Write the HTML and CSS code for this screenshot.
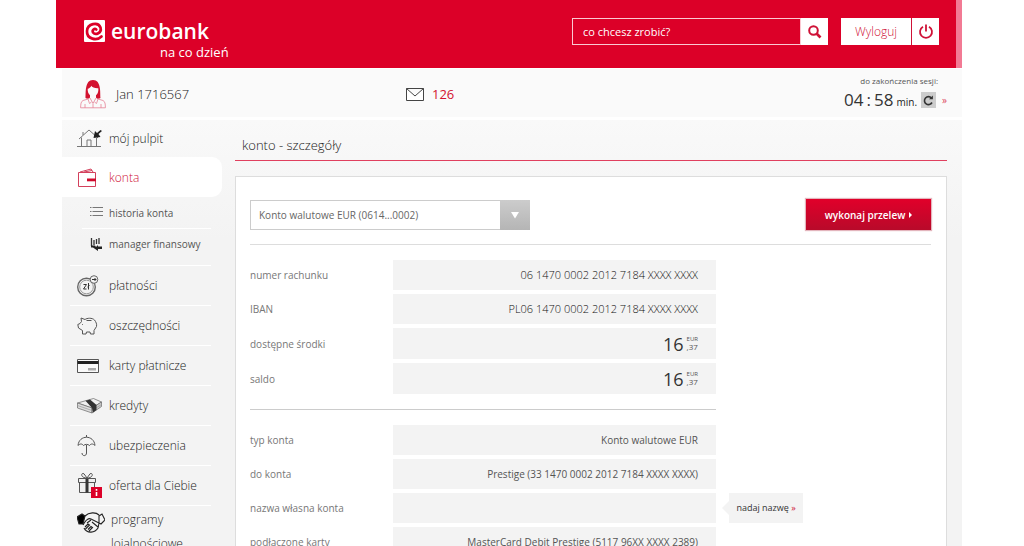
FILE: index.html
```html
<!DOCTYPE html>
<html lang="pl">
<head>
<meta charset="utf-8">
<meta name="viewport" content="width=device-width, initial-scale=1">
<title>eurobank - konto - szczegóły</title>
<link rel="stylesheet" href="styles.css">
</head>
<body>
<div class="page">
  <header class="header">
    <a class="brand" href="#">
      <svg class="brand-mark" viewBox="0 0 21 22" aria-hidden="true">
        <rect width="21" height="22" rx="1" fill="#fff"/>
        <path d="M17.500 16.500C13 21 2.500 19.500 3 11C3.500 3.500 14 1.500 16.500 7.500C18 13 11.500 15.500 9 12.500C7.800 10 10.500 8 12.300 9.500" fill="none" stroke="#dc0028" stroke-width="2.700" stroke-linecap="round"/>
      </svg>
      <span class="brand-name">eurobank</span>
      <span class="brand-tag">na co dzień</span>
    </a>
    <form class="search">
      <input class="search-input" type="text" placeholder="co chcesz zrobić?" aria-label="co chcesz zrobić?">
      <button class="search-button" type="button" aria-label="Szukaj">
        <svg width="14" height="14" viewBox="0 0 14 14" fill="none" stroke="#cf1237" stroke-width="2"><circle cx="5.500" cy="5.500" r="4.300"/><path d="M8.500 8.500l4 4" stroke-width="2.600"/></svg>
      </button>
    </form>
    <button class="logout" type="button">
      <span class="logout-text">Wyloguj</span>
      <span class="logout-icon">
        <svg width="16" height="16" viewBox="0 0 16 16" fill="none" stroke="#cf1237" stroke-width="1.800"><path d="M5 2.700a6 6 0 1 0 6 0M8 .5v7"/></svg>
      </span>
    </button>
  </header>

  <section class="userbar">
    <div class="user">
      <svg width="26" height="30" viewBox="0 0 26 30" aria-hidden="true">
        <path d="M5.500 19C6 14 4.500 1 13 1s7 13 7.500 18c-2 1.500-4 .5-4.500-.5v-2.200c2-1.300 2.600-4.300 2.300-7C15 9.500 12 8.500 11.300 6.800C10.500 8.500 9 9.500 7.700 9.800c-.2 3 .8 5.200 2.300 6.500v2.200C9 20 7 20 5.500 19z" fill="#d3122f"/>
        <path d="M8 20l-5 1.500C1 22.500.7 25 .6 28.800h24.800c0-4-.4-6.300-2.400-7.300L18 20M10 19l3 5.500L16 19M8 20l1.500 4.500 2-1.500M18 20l-1.500 4.500-2-1.500M13 25v4M5 25v4M21 25v4" fill="none" stroke="#e88ea0" stroke-width=".9"/>
      </svg>
      <span class="user-name">Jan 1716567</span>
    </div>
    <a class="mail" href="#">
      <svg width="18" height="13" viewBox="0 0 18 13" fill="#fff" stroke="#444"><path d="M.5.5h17v12H.5zM.5.500L9 8l8.500-7.500"/></svg>
      <span>126</span>
    </a>
    <div class="session">
      <span class="session-label">do zakończenia sesji:</span>
      <div class="session-row">
        <span class="clock">04<span class="colon">:</span>58</span>
        <span class="unit">min.</span>
        <button class="refresh" type="button" aria-label="Odśwież">
          <svg width="11" height="11" viewBox="0 0 11 11" fill="none" stroke="#333" stroke-width="1.600"><path d="M9 7.500A4 4 0 1 1 8.500 3"/><path d="M6 4.200h3.900V.5z" fill="#333" stroke="none"/></svg>
        </button>
        <a class="more" href="#" aria-label="więcej">»</a>
      </div>
    </div>
  </section>

  <div class="layout">
    <nav class="menu">
      <a class="item item-first" href="#">
        <svg class="icon" viewBox="0 0 26 22" fill="none" stroke="#777"><path d="M0 18.500h24M4.500 18V9.500M19.500 18V10M2 11L12 2l9 8M10 18v-6h4v6M6 7V4"/><path d="M25 3l-3.500 3 2 3-7 1 1.500-7 2 2L23.500 2z" fill="#222" stroke="none"/></svg>
        <span>mój pulpit</span>
      </a>
      <a class="item item-active" href="#" aria-current="page">
        <svg class="icon" viewBox="0 0 26 22" fill="none" stroke="#d3405c"><path d="M1.500 5.500h17v14h-17zM3 5l11-3 2 3M7 5l8-1.500"/><path d="M10 11.500h9v2.800h-9z" fill="#cf0a2d" stroke="none"/></svg>
        <span>konta</span>
      </a>
      <a class="subitem" href="#">
        <svg class="subicon" viewBox="0 0 15 13" fill="none" stroke="#777"><path d="M3.500 1.500H14M3.500 5.500H14M3.500 9.500H14M1 1.500h1.500M1 5.500h1.500M1 9.500h1.500"/></svg>
        <span>historia konta</span>
      </a>
      <a class="subitem" href="#">
        <svg class="subicon" viewBox="0 0 15 13" fill="none" stroke="#333"><path d="M2.500 0v8M5 2v5M7.500 1v5M10 0v6" stroke-width="1.300"/><path d="M2 7.500h4l1 1.500 2-2v1.500h4v2.400H9V13L4 9.500H2z" fill="#222" stroke="none"/></svg>
        <span>manager finansowy</span>
      </a>
      <a class="item item-group" href="#">
        <svg class="icon" viewBox="0 0 26 22" fill="none" stroke="#666"><circle cx="9.500" cy="12" r="8.800" stroke-width="1.400"/><circle cx="9.500" cy="12" r="6.800" stroke="#999"/><path d="M6.500 9.500h3l-3 4.500h3M11.500 8v6.500M10.500 12l2-1.500" stroke="#333"/><circle cx="17" cy="4.500" r="3.800" fill="#f3f3f3"/><path d="M15 4.500h4M17.500 3L19 4.500 17.500 6" stroke="#333"/></svg>
        <span>płatności</span>
      </a>
      <a class="item" href="#">
        <svg class="icon" viewBox="0 0 26 22" fill="none" stroke="#555"><path d="M4 3l4 1.500C10 3 15 2.500 17.500 5c1.500 2 2.500 4 2 6.500L17 15.500V19h-3.500l-.5-2H9.500L9 19H5.500v-3.500L1.500 13 .8 9.500 3 8.500l1.500-2zM9.500 5.500h5M5.500 9v.8"/></svg>
        <span>oszczędności</span>
      </a>
      <a class="item" href="#">
        <svg class="icon" viewBox="0 0 26 22" fill="none" stroke="#555"><path d="M.5 4.500h21v13H.5z" fill="#fafafa"/><path d="M.5 6h21v3H.5z" fill="#222" stroke="none"/><path d="M11 13h8v2.500h-8z" fill="#aaa" stroke="none"/></svg>
        <span>karty płatnicze</span>
      </a>
      <a class="item" href="#">
        <svg class="icon" viewBox="0 0 26 22" stroke="#666" stroke-width=".7"><path d="M.5 8l16-4.500 8 3.500-9.500 6z" fill="#f0f0f0"/><path d="M.5 8L15 13v5L.5 13z" fill="#ddd"/><path d="M15 13l9.500-6v4.500L15 18z" fill="#ccc"/><path d="M.5 10.500L15 15.500l9.500-6" fill="none" stroke="#999"/><path d="M8.500 5.800l4.500-1.200 6.500 5.500v5L16 17.500l-1-4.500z" fill="#333" stroke="none"/></svg>
        <span>kredyty</span>
      </a>
      <a class="item" href="#">
        <svg class="icon" viewBox="0 0 26 22" fill="none" stroke="#555"><path d="M1 10.500C2 -.5 17 -.5 18 10.500c-2-2-4-2-5.500 0-1.500-1.500-4.500-1.500-6 0C5 8.500 3 8.500 1 10.500zM9.500 0v2M9.500 10v8c0 3.500-4.500 3.500-4.500 0"/></svg>
        <span>ubezpieczenia</span>
      </a>
      <a class="item" href="#">
        <svg class="icon icon-gift" viewBox="0 0 26 26" fill="none" stroke="#555"><path d="M1.500 5.500h17v4h-17zM2.500 9.500h15v10h-15z" fill="#eee"/><path d="M8.500 5.500h3v14h-3z" fill="#333" stroke="none"/><path d="M10 5C3 5 4-1 7 .8L10 5l3-4.200C16-1 17 5 10 5"/><path d="M14 14h11v11H14z" fill="#dc0028" stroke="none"/><path d="M19.500 16v1.800M19.500 19v4" stroke="#fff" stroke-width="1.600"/></svg>
        <span>oferta dla Ciebie</span>
      </a>
      <a class="item item-last" href="#">
        <svg class="icon icon-hands" viewBox="0 0 28 22" fill="none" stroke="#222" stroke-width="1.100"><path d="M0 5l5-3 3 2-2 8-4 0z" fill="#000"/><path d="M8 4c4-4 11-4 14-1M22 4l3-2 3 6-4 4-2-1zM6 13c3-6 6-7 8-6s6 3 8 4l-1 5c-3 5-11 6-14 0M8 15l3-3 1.500 1-4 4M11 17.500l3-3 1.500 1-3.500 3.500M14 8l-4 3M15 10l6 5" fill="none"/></svg>
        <span>programy lojalnościowe</span>
      </a>
    </nav>

    <main class="main">
      <h1 class="title">konto - szczegóły</h1>
      <div class="panel">
        <div class="toolbar">
          <div class="account">
            <select class="account-select" aria-label="Konto">
              <option>Konto walutowe EUR (0614...0002)</option>
            </select>
            <svg class="account-arrow" viewBox="0 0 30 30" aria-hidden="true"><path d="M11 12h8l-4 6.500z" fill="#fff"/></svg>
          </div>
          <button class="transfer" type="button">wykonaj przelew <svg width="3" height="6" viewBox="0 0 3 6"><path d="M0 0l3 3-3 3z" fill="#fff"/></svg></button>
        </div>

        <dl class="details">
          <div class="row"><dt>numer rachunku</dt><dd class="number">06 1470 0002 2012 7184 XXXX XXXX</dd></div>
          <div class="row"><dt>IBAN</dt><dd class="number">PL06 1470 0002 2012 7184 XXXX XXXX</dd></div>
          <div class="row row-amount"><dt>dostępne środki</dt><dd><span class="whole">16</span><span class="minor"><span class="currency">EUR</span><span>,37</span></span></dd></div>
          <div class="row row-amount"><dt>saldo</dt><dd><span class="whole">16</span><span class="minor"><span class="currency">EUR</span><span>,37</span></span></dd></div>
        </dl>
        <dl class="details details-more">
          <div class="row"><dt>typ konta</dt><dd>Konto walutowe EUR</dd></div>
          <div class="row"><dt>do konta</dt><dd>Prestige (33 1470 0002 2012 7184 XXXX XXXX)</dd></div>
          <div class="row"><dt>nazwa własna konta</dt><dd></dd><dd class="rename"><a href="#">nadaj nazwę <span class="raquo">»</span></a></dd></div>
          <div class="row"><dt>podłączone karty</dt><dd>MasterCard Debit Prestige (5117 96XX XXXX 2389)</dd></div>
        </dl>
      </div>
    </main>
  </div>
</div>
</body>
</html>
```
FILE: styles.css
```css
* { box-sizing: border-box; }

html { scrollbar-width: none; }

body {
  margin: 0;
  background: #fff;
  color: #222;
  font: 300 12px/16px "Open Sans", "Noto Sans", sans-serif;
}

a { color: inherit; text-decoration: none; }

button, input, select { font: inherit; border: 0; border-radius: 0; margin: 0; }

svg { display: block; flex: none; }

.page { margin: 0 62px 0 56px; }

/* Header */
.header {
  display: flex;
  align-items: flex-start;
  height: 68px;
  padding: 18px 17px 0 28px;
  background: #dc0028;
  border-right: 6px solid #f27a94;
  color: #fff;
}

.brand {
  display: grid;
  grid-template-columns: 21px auto;
  column-gap: 6px;
  align-items: center;
  margin-right: auto;
  padding-top: 2px;
}

.brand-mark { width: 21px; height: 22px; }
.brand-name { font-size: 21px; line-height: 22px; font-weight: 600; }
.brand-tag { grid-column: 1 / 3; margin-left: 76px; font-size: 13px; line-height: 20px; font-weight: 400; white-space: nowrap; }

.search { display: flex; width: 256px; height: 27px; margin-right: 13px; }

.search-input {
  flex: 1;
  min-width: 0;
  padding: 0 10px;
  background: transparent;
  border: 1px solid #fbc9d2;
  color: #fff;
  font-size: 11px;
  font-weight: 400;
}

.search-input::placeholder { color: #fff; opacity: 1; }

.search-button {
  display: grid;
  place-items: center;
  width: 27px;
  padding: 0;
  background: #fff;
}

.logout { display: flex; height: 27px; padding: 0; background: #fff; color: #cf1237; }
.logout-text { width: 70px; line-height: 27px; text-align: center; }
.logout-icon { display: grid; place-items: center; width: 28px; height: 27px; border-left: 1px solid #cf1237; }

/* User bar */
.userbar {
  display: grid;
  grid-template-columns: 326px 1fr auto;
  align-items: center;
  height: 48px;
  margin: 1px 0 3px 6px;
  padding: 2px 15px 0 18px;
  background: #fafafa;
}

.user { display: flex; align-items: center; gap: 10px; }
.user-name { font-size: 13px; }
.mail { display: flex; align-items: center; gap: 8px; justify-self: start; color: #d3122f; font-size: 13px; font-weight: 400; }
.session-label { display: block; padding-right: 9px; text-align: right; font-size: 8px; line-height: 12px; font-weight: 400; color: #555; }
.session-row { display: flex; align-items: center; justify-content: flex-end; line-height: 22px; }
.clock { display: flex; font-size: 17px; font-weight: 400; color: #333; }
.colon { padding: 0 3px; }
.unit { margin: 4px 4px 0 3px; font-size: 10px; font-weight: 400; }
.refresh { display: grid; place-items: center; width: 15px; height: 16px; padding: 0; background: #ccc; }
.more { margin-left: 6px; color: #dc4560; font-size: 10px; font-weight: 400; }

/* Layout */
.layout {
  display: grid;
  grid-template-columns: 160px 1fr;
  column-gap: 13px;
  margin-left: 6px;
  padding-right: 15px;
  background: linear-gradient(#f9f9f9, #f3f3f3 120px);
}

/* Menu */
.item {
  display: flex;
  align-items: center;
  gap: 6px;
  min-height: 40px;
  margin: 0 11px 0 8px;
  padding-left: 7px;
  border-top: 1px solid #fff;
}

.item-first { min-height: 37px; border-top: 0; }
.item-active { margin: 0 0 0 -6px; padding-left: 21px; border-radius: 0 10px 10px 0; background: #fff; color: #cf1237; }
.item-group { margin-top: 6px; }
.icon { width: 26px; height: 22px; }
.icon-gift { height: 26px; }
.icon-hands { width: 28px; }
.item-last { align-items: flex-start; line-height: 24px; padding-top: 2px; }
.item-last .icon { margin-top: 4px; }

.subitem {
  display: flex;
  align-items: center;
  gap: 5px;
  height: 31px;
  margin: 0 11px 0 20px;
  padding-left: 7px;
  font-size: 10px;
  font-weight: 400;
  color: #555;
}

.subitem + .subitem { border-top: 1px solid #fff; }
.subicon { width: 15px; height: 13px; }

/* Main */
.title {
  margin: 0 0 15px;
  padding: 15px 7px 5px;
  border-bottom: 1px solid #e0405f;
  font-size: 13px;
  line-height: 20px;
  font-weight: 300;
}

.panel { padding: 22px 15px 22px 14px; background: #fff; border: 1px solid #ddd; }

.toolbar {
  display: flex;
  justify-content: space-between;
  align-items: center;
  padding-bottom: 14px;
  border-bottom: 1px solid #ddd;
}

.account { display: flex; width: 280px; height: 30px; position: relative; }

.account-select {
  width: 100%;
  padding: 0 38px 0 8px;
  appearance: none;
  background: #fff;
  border: 1px solid #ccc;
  color: #666;
  font-size: 10px;
  font-weight: 400;
}

.account-arrow {
  position: absolute;
  right: 0;
  top: 0;
  width: 30px;
  height: 30px;
  background: linear-gradient(#ccc, #b5b5b5);
  pointer-events: none;
}

.transfer {
  display: flex;
  align-items: center;
  justify-content: center;
  gap: 4px;
  width: 125px;
  height: 31px;
  padding: 0;
  background: linear-gradient(#e1002a, #b80a2a);
  box-shadow: 0 0 1px 1px #e3b5bd;
  color: #fff;
  font-size: 10px;
  font-weight: 600;
}

.details {
  display: grid;
  gap: 4px;
  width: 466px;
  margin: 0;
  padding: 15px 0;
  font-size: 10px;
  font-weight: 400;
  color: #777;
}

.details-more { border-top: 1px solid #ccc; }
.row { display: grid; grid-template-columns: 143px 1fr; align-items: center; position: relative; }
.row dd {
  display: flex;
  align-items: center;
  justify-content: flex-end;
  gap: 3px;
  height: 30px;
  margin: 0;
  padding: 0 18px;
  background: #f3f3f3;
  color: #555;
}

.row .number { font-size: 11px; font-weight: 300; color: #111; }
.row-amount dd { height: 31px; }
.whole { font-size: 18px; color: #333; }
.minor { display: grid; font-size: 8px; line-height: 8px; }
.currency { font-size: 6px; line-height: 7px; }

.row .rename {
  position: absolute;
  left: 479px;
  top: 0;
  width: 74px;
  padding: 0;
  justify-content: center;
  font-size: 9px;
  color: #333;
}

.rename::before {
  content: "";
  position: absolute;
  right: 100%;
  border: 7px solid transparent;
  border-left-width: 0;
  border-right-color: #f3f3f3;
}

.raquo { color: #cf1237; }
```
